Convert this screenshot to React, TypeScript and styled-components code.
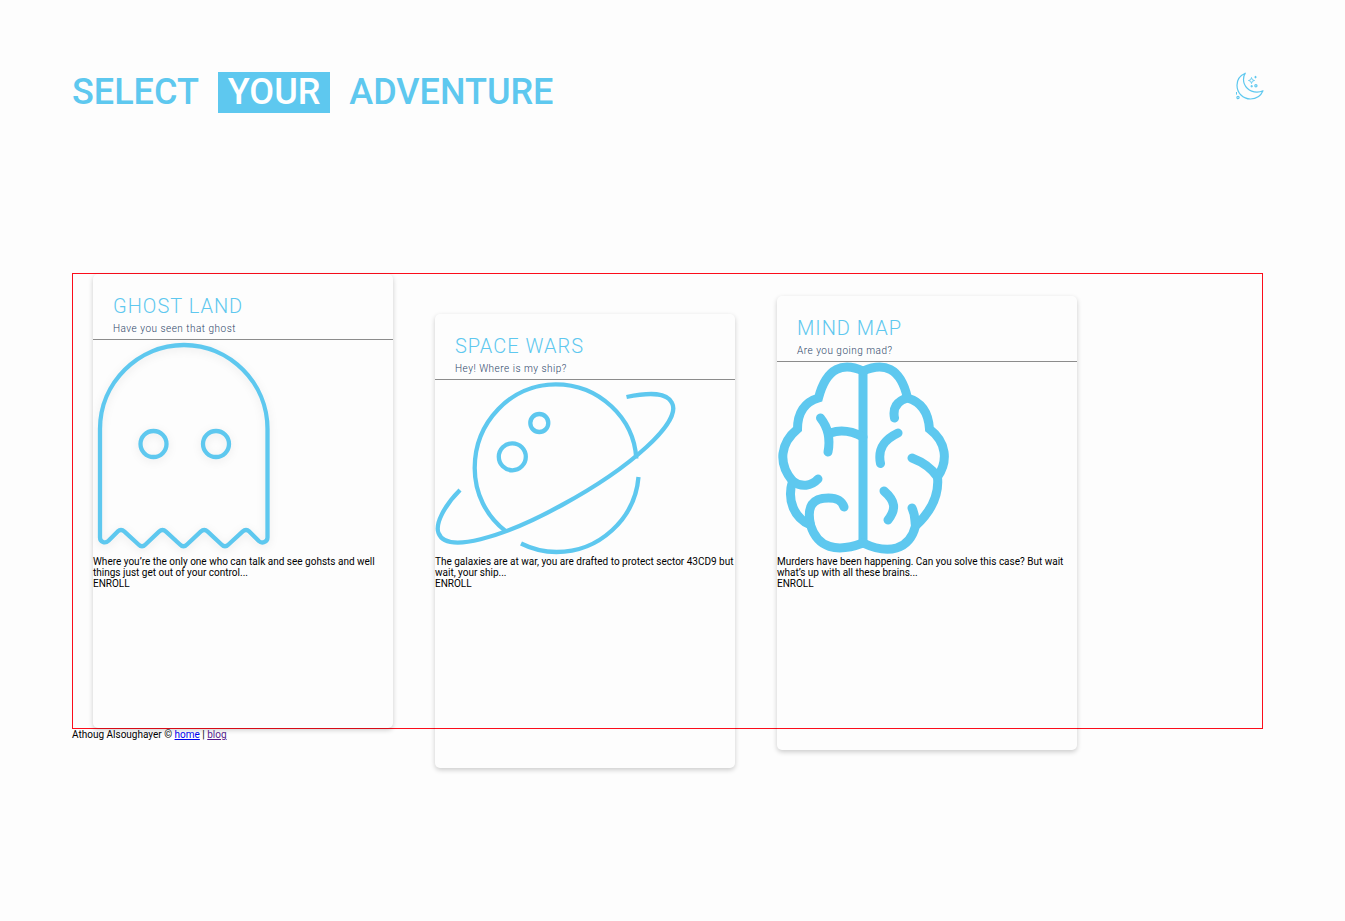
import React from "react";
import styled, { createGlobalStyle, css } from "styled-components";

const sky = "#5ec8ef";

const GlobalStyle = createGlobalStyle`
  *, *::before, *::after { box-sizing: border-box; }
  body {
    margin: 0;
    background: #fdfdfd;
    color: #000;
    font-family: Roboto, "Liberation Sans", sans-serif;
    font-size: 10px;
    line-height: 11px;
  }
`;

const Page = styled.div`
  padding: 72px 82px 72px 72px;
`;

const Header = styled.header`
  display: flex;
  justify-content: space-between;
  align-items: flex-start;
  height: 201px;
`;

const Title = styled.h1`
  display: flex;
  align-items: center;
  gap: 19px;
  margin: 0;
  color: ${sky};
  font-size: 36px;
  font-weight: 500;
  line-height: 41px;
`;

const Highlight = styled.span`
  padding: 0 10px;
  background: ${sky};
  color: #fff;
`;

const ThemeButton = styled.button`
  display: block;
  padding: 0;
  border: 0;
  background: none;
  color: ${sky};
  cursor: pointer;

  svg {
    display: block;
    width: 28px;
    height: 28px;
    overflow: visible;
  }
`;

const Deck = styled.main`
  display: flex;
  align-items: flex-start;
  gap: 42px;
  padding: 0 20px;
  border: 1px solid #fc0d1b;
`;

const Card = styled.article<{ $drop: number }>`
  flex: 0 0 300px;
  height: 454px;
  border-radius: 5px;
  box-shadow: 0 2px 5px rgba(0, 0, 0, 0.2);
  ${({ $drop }) => css`
    margin-top: ${$drop}px;
    margin-bottom: -${$drop}px;
  `}
`;

const CardHeader = styled.div`
  padding: 20px 20px 4px;
  border-bottom: 1px solid #8c8c8c;
`;

const CardTitle = styled.h2`
  margin: 0;
  color: ${sky};
  font-size: 20px;
  font-weight: 300;
  letter-spacing: 1px;
  line-height: 24px;
`;

const CardSubtitle = styled.p`
  margin: 5px 0 0;
  color: #2c4468;
  font-size: 10px;
  font-weight: 300;
  letter-spacing: 0.5px;
  line-height: 12px;
`;

const Art = styled.div`
  color: ${sky};

  svg {
    display: block;
    overflow: visible;
  }
`;

const GhostSvg = styled.svg`
  filter: drop-shadow(0 2px 4px rgba(0, 0, 0, 0.08));
`;

const Text = styled.p`
  margin: 0;
`;

const Enroll = styled.button`
  display: block;
  padding: 0;
  border: 0;
  background: none;
  color: inherit;
  font: inherit;
  cursor: pointer;
`;

const FooterLink = styled.a<{ $visited?: boolean }>`
  color: ${({ $visited }) => ($visited ? "#551a8b" : "#0000ee")};
`;

const Moon = () => (
  <svg viewBox="-1 0 28 28" fill="none" stroke="currentColor" strokeWidth="1.2" strokeLinejoin="round" aria-hidden="true">
    <path d="M9.3 1.2C4.5 3.2 1 7.5 1 13.2C1 21 7 27 14.5 27C20 27 24.8 24 27 18.8C25 19.8 23 20.2 21 20.2C13 20.2 7.5 14 7.5 7.5C7.5 5 8 3 9.3 1.2Z" />
    <path d="M15.5 5.5L16.3 7.7L18.5 8.5L16.3 9.3L15.5 11.5L14.7 9.3L12.5 8.5L14.7 7.7Z" strokeWidth="0.9" />
    <path d="M19.5 3.9v2.4M18.3 5.1h2.4M15.7 13v2.4M14.5 14.2h2.4M.5 20v2.6" strokeWidth="1" />
    <circle cx="19.9" cy="13.8" r="1.1" />
    <circle cx="2" cy="25.5" r="1.1" />
  </svg>
);

const Ghost = () => (
  <GhostSvg width="190" height="216" viewBox="0 0 190 216" fill="none" stroke="currentColor" strokeWidth="4.3" strokeLinejoin="round" aria-hidden="true">
    <path d="M7 89C7 43 45 5 91 5S174.500 43 174.500 89V197.500C174.500 202 169 204 165.800 201L156.500 191.700Q153 188.500 149.500 191.700L135.500 204.500Q132 208 128.500 204.500L114.700 191.700Q111.200 188.500 107.700 191.700L94 204.500Q90.500 208 87 204.500L73 191.700Q69.500 188.500 66 191.700L52.500 204.500Q49 208 45.500 204.500L31.500 191.700Q28 188.500 24.500 191.700L15.500 200.700C12 204 7 202 7 197.500Z" />
    <circle cx="60.5" cy="104" r="13" />
    <circle cx="123" cy="104" r="13" />
  </GhostSvg>
);

const Planet = () => (
  <svg width="250" height="176" viewBox="0 0 250 176" fill="none" stroke="currentColor" strokeWidth="4.3" aria-hidden="true">
    <path d="M70.500 151C51 136 39.700 113 39.700 88C39.700 42 76 4.300 120.700 4.300C164 4.300 199 38 201.300 78.500" />
    <path d="M203.500 97C200 139 164 172 121.500 172C109 172 97 169 86 163.500" />
    <path d="M25 110C9 126 0 144 3.500 153C11 174 67 158 127 125C195 88 247 42 237 23C232 12.500 216 12 191.500 17" />
    <circle cx="77.3" cy="76.8" r="13.5" />
    <circle cx="104.3" cy="43" r="9" />
  </svg>
);

const Brain = () => (
  <svg width="180" height="194" viewBox="-0.5 0 180 194" fill="none" stroke="currentColor" strokeWidth="9" strokeLinecap="round" aria-hidden="true">
    <path d="M85.500 9V181" />
    <path d="M85.500 9C66 0 49 5 41 36C27 40 20 51 20 67C3 81 0 101 15 119C9 139 17 156 33 163C40 186 59 191 85.500 181" />
    <path d="M85.500 9C106 0 123 5 130 36C144 40 151 51 152 67C169 80 171 99 160 115C162 135 152 151 138 164C132 188 111 193 85.500 181" />
    <path d="M43 56C51 66 53 77 50.500 90M53 71C64 67 76 70 85.500 75M15 119C24 126 34 124 40.500 117" />
    <path d="M33 163C29 144 35 136 51 136C59 136 64 138 66.500 145" />
    <path d="M130 36C119 39 115 46 117 56M120.500 71C106 78 100 87 103 101.500M134.500 96C145 100 154 106 160 115M106.500 129C118 139 119 147 110.500 158M134.500 146C138 153 137 158 138 164" />
  </svg>
);

const adventures = [
  { title: "GHOST LAND", subtitle: "Have you seen that ghost", text: "Where you’re the only one who can talk and see gohsts and well things just get out of your control...", Picture: Ghost, drop: 0 },
  { title: "SPACE WARS", subtitle: "Hey! Where is my ship?", text: "The galaxies are at war, you are drafted to protect sector 43CD9 but wait, your ship...", Picture: Planet, drop: 40 },
  { title: "MIND MAP", subtitle: "Are you going mad?", text: "Murders have been happening. Can you solve this case? But wait what’s up with all these brains...", Picture: Brain, drop: 22 },
];

export default function App() {
  return (
    <Page>
      <GlobalStyle />
      <Header>
        <Title>
          SELECT <Highlight>YOUR</Highlight> ADVENTURE
        </Title>
        <ThemeButton type="button" aria-label="Toggle dark mode">
          <Moon />
        </ThemeButton>
      </Header>
      <Deck>
        {adventures.map(({ title, subtitle, text, Picture, drop }) => (
          <Card key={title} $drop={drop}>
            <CardHeader>
              <CardTitle>{title}</CardTitle>
              <CardSubtitle>{subtitle}</CardSubtitle>
            </CardHeader>
            <Art>
              <Picture />
            </Art>
            <Text>{text}</Text>
            <Enroll type="button">ENROLL</Enroll>
          </Card>
        ))}
      </Deck>
      <footer>
        Athoug Alsoughayer © <FooterLink href="#home">home</FooterLink> |{" "}
        <FooterLink href="#blog" $visited>blog</FooterLink>
      </footer>
    </Page>
  );
}
